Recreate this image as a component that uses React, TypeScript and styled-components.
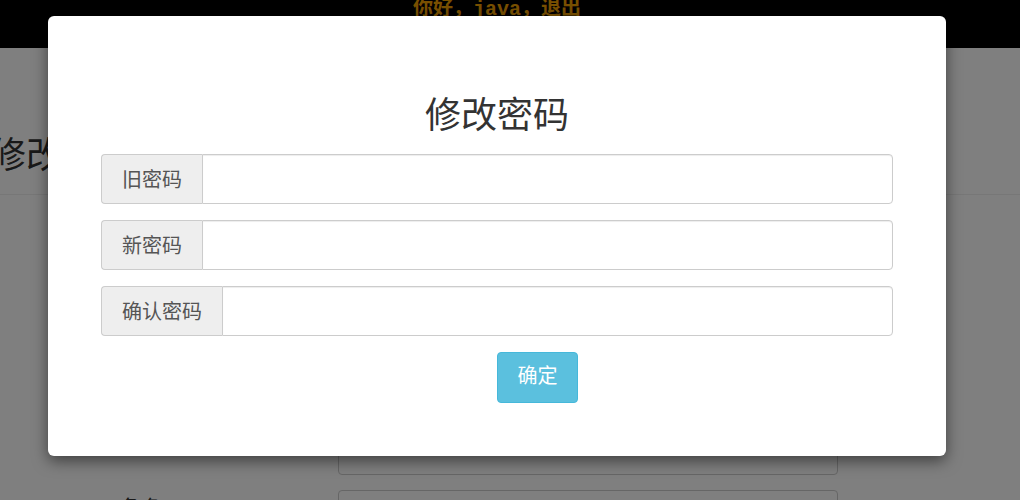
import React from "react"
import styled, { createGlobalStyle } from "styled-components"

const GlobalStyle = createGlobalStyle`
  html, body {
    margin: 0;
    padding: 0;
    background: #fff;
    font-family: "Liberation Sans", "Noto Sans CJK SC", sans-serif;
    overflow: hidden;
  }
`

const Page = styled.div`
  width: 1020px;
  height: 500px;
  overflow: hidden;
  position: relative;
`

// header behind the modal
const TopBar = styled.div`
  height: 48px;
  background: #000;
  overflow: hidden;
  display: flex;
  justify-content: center;
`

const Greeting = styled.div`
  margin-top: -6px;
  margin-left: -26px;
  font-size: 20px;
  line-height: 26px;
  font-weight: bold;
  color: #f2a000;
  font-family: "Noto Sans CJK SC", sans-serif;
  > span {
    font-family: "Liberation Mono", monospace;
    font-weight: bold;
  }
`

const PageHeader = styled.div`
  border-bottom: 1px solid #eee;
  padding: 78px 0 16px;
  margin-bottom: 244px;
`

const PageTitle = styled.h1`
  margin: 0 0 0 -10px;
  font-size: 36px;
  line-height: 52px;
  font-weight: normal;
  color: #333;
  font-family: "Noto Sans CJK SC", sans-serif;
`

const FormRow = styled.div`
  display: grid;
  grid-template-columns: 338px 500px;
  align-items: start;
  margin-bottom: 15px;
`

const RowLabel = styled.label`
  padding-left: 120px;
  padding-top: 0;
  font-size: 22px;
  color: #333;
  font-family: "Noto Sans CJK SC", sans-serif;
`

const RowInput = styled.div`
  height: 34px;
  border: 1px solid #ccc;
  border-radius: 4px;
  background: #fff;
`

const Backdrop = styled.div`
  position: absolute;
  inset: 0;
  background: rgba(0, 0, 0, 0.5);
`

const Modal = styled.div`
  position: absolute;
  left: 48px;
  top: 16px;
  width: 898px;
  box-sizing: border-box;
  background: #fff;
  border-radius: 6px;
  box-shadow: 0 5px 15px rgba(0, 0, 0, 0.5);
  padding: 76px 53px 53px 53px;
  display: flex;
  flex-direction: column;
  align-items: center;
  font-family: "Noto Sans CJK SC", sans-serif;
`

const ModalTitle = styled.h2`
  margin: 0 0 22px;
  font-size: 36px;
  line-height: 40px;
  font-weight: normal;
  color: #333;
`

const InputGroup = styled.div`
  display: flex;
  width: 100%;
  height: 50px;
  margin-bottom: 16px;
`

const Addon = styled.span`
  display: flex;
  align-items: center;
  padding: 0 20px 2px;
  background: #eee;
  border: 1px solid #ccc;
  border-right: 0;
  border-radius: 4px 0 0 4px;
  color: #555;
  font-size: 20px;
  white-space: nowrap;
`

const Field = styled.input`
  flex: 1;
  min-width: 0;
  border: 1px solid #ccc;
  border-radius: 0 4px 4px 0;
  box-shadow: inset 0 1px 1px rgba(0, 0, 0, 0.075);
  outline: none;
  padding: 0 12px;
  font-size: 18px;
`

const ButtonRow = styled.div`
  width: 100%;
  padding-left: 50%;
  box-sizing: border-box;
`

const SubmitButton = styled.button`
  display: block;
  width: 81px;
  height: 51px;
  background: #5bc0de;
  border: 1px solid #46b8da;
  border-radius: 4px;
  color: #fff;
  font-size: 20px;
  font-family: "Noto Sans CJK SC", sans-serif;
  padding: 0 0 6px;
  cursor: pointer;
`

const fields = ["旧密码", "新密码", "确认密码"]

const App: React.FC = () => {
  return (
    <Page>
      <GlobalStyle />
      <TopBar>
        <Greeting>
          你好，<span>java</span>，退出
        </Greeting>
      </TopBar>
      <PageHeader>
        <PageTitle>修改密码</PageTitle>
      </PageHeader>
      <FormRow>
        <span />
        <RowInput />
      </FormRow>
      <FormRow>
        <RowLabel>角色</RowLabel>
        <RowInput />
      </FormRow>

      <Backdrop />
      <Modal>
        <ModalTitle>修改密码</ModalTitle>
        {fields.map((f) => (
          <InputGroup key={f}>
            <Addon>{f}</Addon>
            <Field type="password" />
          </InputGroup>
        ))}
        <ButtonRow>
          <SubmitButton>确定</SubmitButton>
        </ButtonRow>
      </Modal>
    </Page>
  )
}

export default App
